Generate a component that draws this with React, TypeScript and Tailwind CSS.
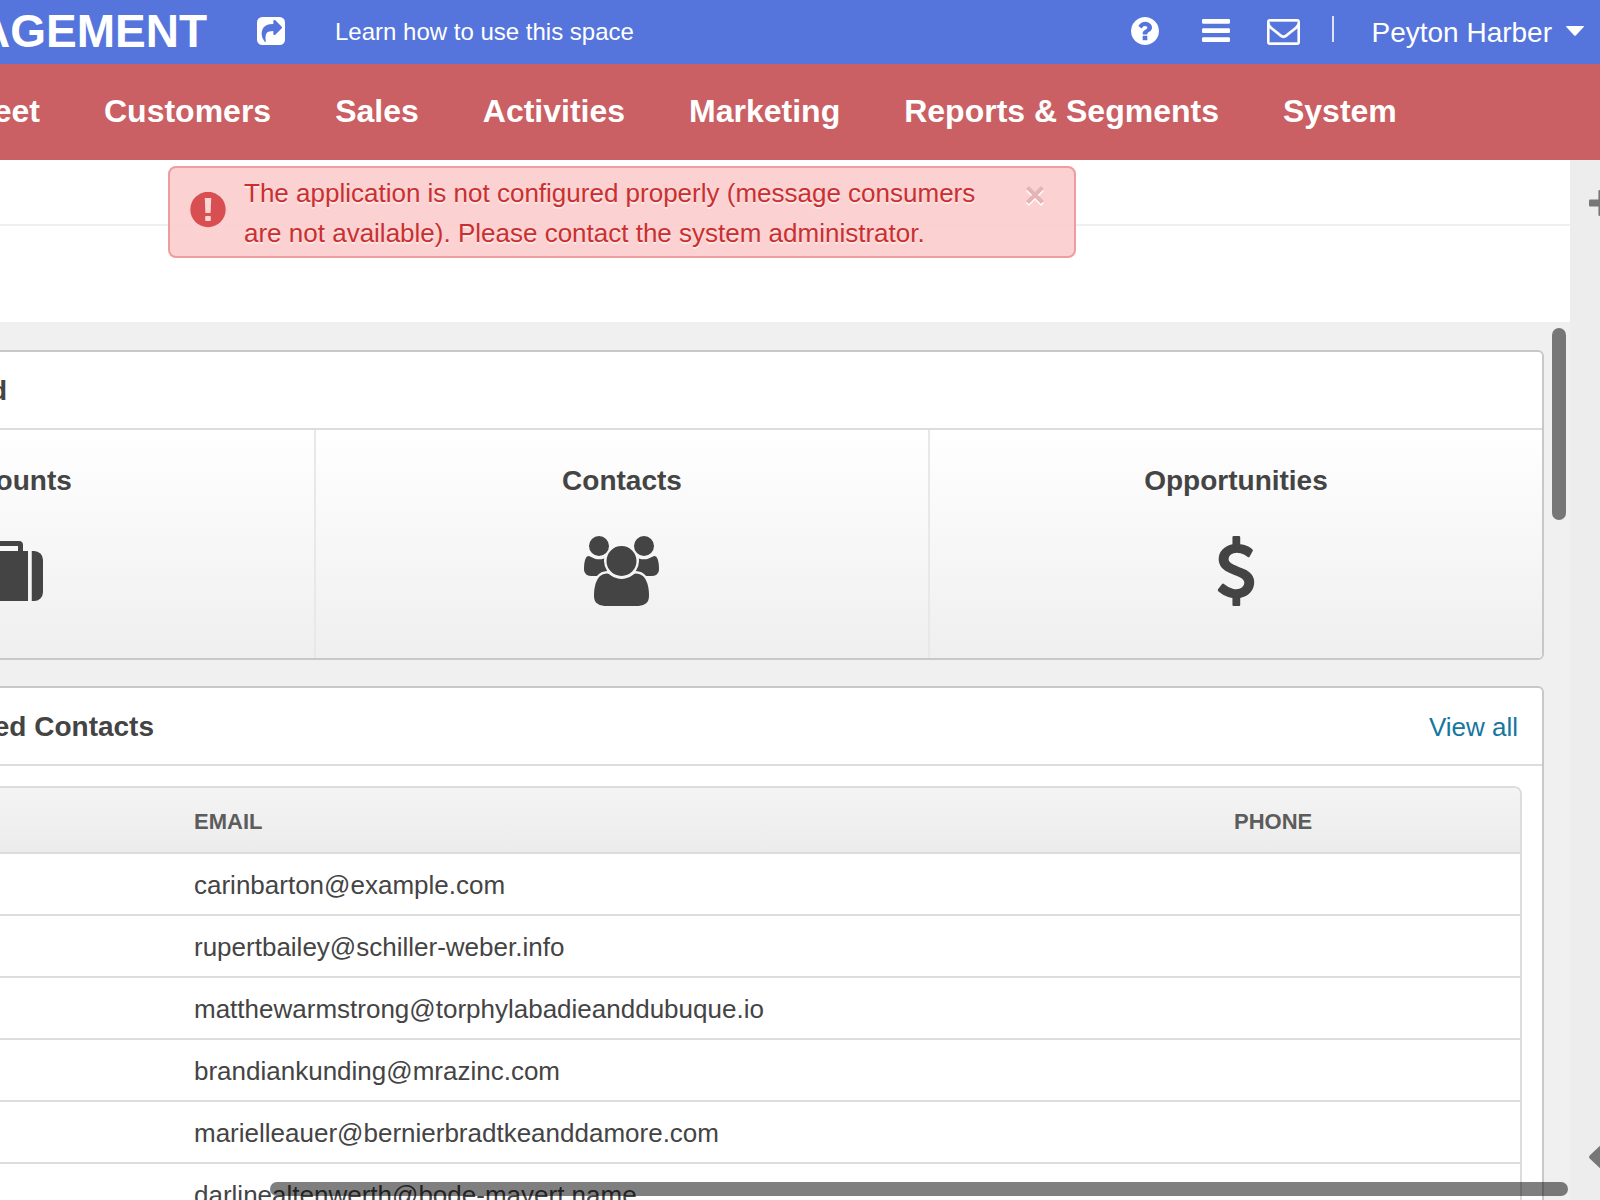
import React from "react";

/* Icon outlines are defined on a y-up grid, so each one is flipped into place. */
function Glyph({ d, box, className }: { d: string; box: string; className: string }) {
  return (
    <svg viewBox={box} className={className} fill="currentColor" preserveAspectRatio="none" aria-hidden="true">
      <path d={d} transform="scale(1,-1)" />
    </svg>
  );
}

const SHARE =
  "M1005 435l352 352q19 19 19 45t-19 45l-352 352q-30 31 -69 14q-40 -17 -40 -59v-160q-119 0 -216 -19.5t-162.5 -51t-114 -79t-76.5 -95.5t-44.5 -109t-21.5 -111.5t-5 -110.5q0 -181 167 -404q11 -12 25 -12q7 0 13 3q22 9 19 33q-44 354 62 473q46 52 130 75.5t224 23.5v-160q0 -42 40 -59q12 -5 24 -5q26 0 45 19zM1536 1120v-960q0 -119 -84.5 -203.5t-203.5 -84.5h-960q-119 0 -203.5 84.5t-84.5 203.5v960q0 119 84.5 203.5t203.5 84.5h960q119 0 203.5 -84.5t84.5 -203.5z";

const USERS =
  "M593 640q-162 -5 -265 -128h-134q-82 0 -138 40.5t-56 118.5q0 353 124 353q6 0 43.5 -21t97.5 -42.5t119 -21.5q67 0 133 23q-5 -37 -5 -66q0 -139 81 -256zM1664 3q0 -120 -73 -189.5t-194 -69.5h-874q-121 0 -194 69.5t-73 189.5q0 53 3.5 103.5t14 109t26.5 108.5t43 97.5t62 81t85.5 53.5t111.5 20q10 0 43 -21.5t73 -48t107 -48t135 -21.5t135 21.5t107 48t73 48t43 21.5q61 0 111.5 -20t85.5 -53.5t62 -81t43 -97.5t26.5 -108.5t14 -109t3.5 -103.5zM640 1280q0 -106 -75 -181t-181 -75t-181 75t-75 181t75 181t181 75t181 -75t75 -181zM1344 896q0 -159 -112.5 -271.5t-271.5 -112.5t-271.5 112.5t-112.5 271.5t112.5 271.5t271.5 112.5t271.5 -112.5t112.5 -271.5zM1920 671q0 -78 -56 -118.5t-138 -40.5h-134q-103 123 -265 128q81 117 81 256q0 29 -5 66q66 -23 133 -23q59 0 119 21.5t97.5 42.5t43.5 21q124 0 124 -353zM1792 1280q0 -106 -75 -181t-181 -75t-181 75t-75 181t75 181t181 75t181 -75t75 -181z";

const DOLLAR =
  "M978 351q0 -153 -99.5 -263.5t-258.5 -136.5v-175q0 -14 -9 -23t-23 -9h-135q-13 0 -22.5 9.5t-9.5 22.5v175q-66 9 -127.5 31t-101.5 44.5t-74 48t-46.5 37.5t-17.5 18q-17 21 -2 41l103 135q7 10 23 12q15 2 24 -9l2 -2q113 -99 243 -125q37 -8 74 -8q81 0 142.5 43t61.5 122q0 28 -15 53t-33.5 42t-58.5 37.5t-66 32t-80 32.5q-39 16 -61.5 25t-61.5 26.5t-62.5 31t-56.5 35.5t-53.5 42.5t-43.5 49t-35.5 58t-21 66.5t-8.5 78q0 138 98 242t255 134v180q0 13 9.5 22.5t22.5 9.5h135q14 0 23 -9t9 -23v-176q57 -6 110.5 -23t87 -33.5t63.5 -37.5t39 -29t15 -14q17 -18 5 -38l-81 -146q-8 -15 -23 -16q-14 -3 -27 7q-3 3 -14.5 12t-39 26.5t-58.5 32t-74.5 26t-85.5 11.5q-95 0 -155 -43t-60 -111q0 -26 8.5 -48t29.5 -41.5t39.5 -33t56 -31t60.5 -27t70 -27.5q53 -20 81 -31.5t76 -35t75.5 -42.5t62 -50t53 -63.5t31.5 -76.5t13 -94z";

const SUITCASE =
  "M640 1280h512v128h-512zM288 1280v-1280h-64q-92 0 -158 66t-66 158v832q0 92 66 158t158 66zM1408 1280v-1280h-1024v1280h128v160q0 40 28 68t68 28h576q40 0 68 -28t28 -68v-160zM1792 1056v-832q0 -92 -66 -158t-158 -66h-64v1280h64q92 0 158 -66t66 -158z";

function HelpIcon() {
  return (
    <svg viewBox="128 128 1536 1536" className="h-7 w-7" fill="currentColor" aria-hidden="true">
      <path d="M1024 1376v-192q0-14-9-23t-23-9h-192q-14 0-23 9t-9 23v192q0 14 9 23t23 9h192q14 0 23-9t9-23zm256-672q0-88-55.5-163t-138.5-116-170-41q-243 0-371 213-15 24 8 42l132 100q7 6 19 6 16 0 25-12 53-68 86-92 34-24 86-24 48 0 85.5 26t37.5 59q0 38-20 61t-68 45q-63 28-115.5 86.5t-52.5 125.5v36q0 14 9 23t23 9h192q14 0 23-9t9-23q0-19 21.5-49.5t54.5-49.5q32-18 49-28.5t46-35 44.5-48 28-60.5 12.5-81zm384 192q0 209-103 385.5t-279.5 279.5-385.5 103-385.5-103-279.5-279.5-103-385.5 103-385.5 279.5-279.5 385.5-103 385.5 103 279.5 279.5 103 385.5z" />
    </svg>
  );
}

function MenuIcon() {
  return (
    <svg viewBox="0 0 28 23" className="mb-px h-[23px] w-7" fill="currentColor" aria-hidden="true">
      <rect x="0" y="0" width="28" height="4.7" rx="1.2" />
      <rect x="0" y="9.2" width="28" height="4.7" rx="1.2" />
      <rect x="0" y="18.3" width="28" height="4.7" rx="1.2" />
    </svg>
  );
}

function MailIcon() {
  return (
    <svg viewBox="0 256 1792 1408" className="mt-0.5 h-[26px] w-[33px]" fill="currentColor" stroke="currentColor" strokeWidth="24" aria-hidden="true">
      <path d="M1664 1504v-768q-32 36-69 66-268 206-426 338-51 43-83 67t-86.5 48.5-102.5 24.5h-2q-48 0-102.5-24.5t-86.5-48.5-83-67q-158-132-426-338-37-30-69-66v768q0 13 9.5 22.5t22.5 9.5h1472q13 0 22.5-9.5t9.5-22.5zm0-1051v-24.5l-.5-13-3-12.5-5.5-9-9-7.5-14-2.5h-1472q-13 0-22.5 9.5t-9.5 22.5q0 168 147 284 193 152 401 317 6 5 35 29.5t46 37.5 44.5 31.5 50.5 27.5 43 9h2q20 0 43-9t50.5-27.5 44.5-31.5 46-37.5 35-29.5q208-165 401-317 54-43 100.5-115.5t46.5-131.5zm128-37v1088q0 66-47 113t-113 47h-1472q-66 0-113-47t-47-113v-1088q0-66 47-113t113-47h1472q66 0 113 47t47 113z" />
    </svg>
  );
}

function TopBar() {
  return (
    <header className="flex h-16 items-center bg-[#5575dc] text-white">
      <div className="flex w-[207px] shrink-0 justify-end pb-px text-[46px] leading-[63px] font-bold">MANAGEMENT</div>
      <Glyph d={SHARE} box="0 -1408 1536 1536" className="-mt-0.5 ml-[50px] h-7 w-7" />
      <span className="ml-[50px] text-2xl leading-[64px] whitespace-nowrap">Learn how to use this space</span>
      <div className="ml-auto flex h-16 items-center pr-4">
        <div className="-mt-0.5 flex items-center">
          <HelpIcon />
          <div className="ml-[43px]"><MenuIcon /></div>
          <div className="ml-[37px]"><MailIcon /></div>
        </div>
        <div className="mb-[6px] ml-[32px] h-[26px] w-0.5 bg-[#dde3f8]" />
        <span className="ml-[37px] pt-0.5 text-[28px] leading-[62px] whitespace-nowrap">Peyton Harber</span>
        <svg viewBox="0 0 18 10" className="mb-0.5 ml-[14px] h-[10px] w-[18px]" fill="currentColor" aria-hidden="true">
          <path d="M.6 0h16.8q.9.2.3 1L10 9.300q-1 1-2 0L.3 1Q-.3.2.6 0z" />
        </svg>
      </div>
    </header>
  );
}

const NAV = ["Customers", "Sales", "Activities", "Marketing", "Reports & Segments", "System"];

function Nav() {
  return (
    <nav className="flex h-24 items-center gap-16 bg-[#ca6064] pb-0.5 text-[32px] leading-[94px] font-bold whitespace-nowrap text-white">
      <div className="flex w-10 shrink-0 justify-end">Sheet</div>
      {NAV.map((n) => (
        <div key={n}>{n}</div>
      ))}
    </nav>
  );
}

function Alert() {
  return (
    <div className="absolute top-[166px] left-[168px] flex h-[92px] w-[908px] rounded-lg border-2 border-[#ee9c9e] bg-[#fbcccd]/90">
      <svg viewBox="0 0 36 36" className="mt-6 ml-5 h-9 w-9 shrink-0" aria-hidden="true">
        <circle cx="18" cy="17.500" r="17.700" fill="#d84f52" />
        <path d="M14.800 6h6.400l-.6 15h-5.200z" fill="#fbd5d5" />
        <rect x="15.200" y="24" width="5.600" height="5" rx="1" fill="#fbd5d5" />
      </svg>
      <p className="mt-[5px] ml-[18px] w-[750px] text-[26px] leading-[40px] text-[#c9302f] [text-shadow:0_2px_0_rgba(255,255,255,0.5)]">
        The application is not configured properly (message consumers are not available). Please contact the system administrator.
      </p>
      <svg viewBox="0 0 18 20" className="mt-[18px] ml-8 h-5 w-[18px]" aria-hidden="true">
        <path d="M1.500 3.500l15 15M16.500 3.500l-15 15" stroke="#fff" strokeWidth="4" />
        <path d="M1.500 1.500l15 15M16.500 1.500l-15 15" stroke="#e6b4b7" strokeWidth="4" />
      </svg>
    </div>
  );
}

function Launchpad() {
  const cell = "flex flex-col items-center pt-[33px] border-r-2 border-[#e8e8e8] last:border-r-0";
  return (
    <section className="-ml-[300px] w-[1844px] overflow-hidden rounded-md border-2 border-[#c8c8c8] bg-white">
      <div className="flex h-[78px] items-center border-b-2 border-[#dcdcdc] pt-0.5">
        <h2 className="flex w-[305px] justify-end text-[28px] font-bold">Quick Launchpad</h2>
      </div>
      <div className="grid h-[228px] grid-cols-[614px_614px_612px] bg-linear-to-b from-white to-[#efefef] text-[28px] leading-[36px] font-bold">
        <div className={cell}>
          <span>Accounts</span>
          <Glyph d={SUITCASE} box="0 -1536 1792 1536" className="mt-[42px] h-[60px] w-[70px]" />
        </div>
        <div className={cell}>
          <span>Contacts</span>
          <Glyph d={USERS} box="0 -1536 1920 1792" className="mt-[37px] mr-px h-[70px] w-[75px]" />
        </div>
        <div className={cell}>
          <span>Opportunities</span>
          <Glyph d={DOLLAR} box="0 -1536 1024 1792" className="mt-[37px] h-[70px] w-10" />
        </div>
      </div>
    </section>
  );
}

const EMAILS = [
  "carinbarton@example.com",
  "rupertbailey@schiller-weber.info",
  "matthewarmstrong@torphylabadieanddubuque.io",
  "brandiankunding@mrazinc.com",
  "marielleauer@bernierbradtkeanddamore.com",
  "darlinealtenwerth@bode-mayert.name",
];

function Contacts() {
  return (
    <section className="mt-[26px] -ml-[300px] w-[1844px] overflow-hidden rounded-t-md border-2 border-[#c8c8c8] bg-white">
      <div className="flex h-[78px] items-center border-b-2 border-[#dcdcdc] pt-0.5">
        <h2 className="flex w-[452px] justify-end text-[28px] font-bold whitespace-nowrap">Recently Accessed Contacts</h2>
        <span className="mr-[24px] ml-auto text-[26px] text-[#16769f]">View all</span>
      </div>
      <div className="mx-5 mt-5 overflow-hidden rounded-t-lg border-2 border-[#dcdcdc]">
        <div className="grid h-[66px] grid-cols-[1040px_1fr] items-center border-b-2 border-[#dcdcdc] bg-linear-to-b from-[#f4f4f4] to-[#ececec] pt-[3px] pl-[470px] text-[22px] font-bold text-[#5c5c5c]">
          <span>EMAIL</span>
          <span>PHONE</span>
        </div>
        {EMAILS.map((e) => (
          <div key={e} className="flex h-[62px] items-center border-b-2 border-[#dcdcdc] pt-[3px] pl-[470px] text-[26px]">
            {e}
          </div>
        ))}
      </div>
    </section>
  );
}

export default function App() {
  return (
    <div className="relative flex h-[1200px] w-[1600px] flex-col overflow-hidden bg-white font-['Liberation_Sans',Arial,sans-serif] text-[#444444]">
      <TopBar />
      <Nav />
      <div className="flex min-h-0 flex-1">
        <main className="flex w-[1570px] shrink-0 flex-col overflow-hidden">
          <div className="h-[66px] shrink-0 border-b-2 border-[#f0f0f0]" />
          <div className="h-24 shrink-0" />
          <div className="min-h-0 flex-1 overflow-hidden bg-[#f0f0f0] pt-7">
            <Launchpad />
            <Contacts />
          </div>
        </main>
        <aside className="flex w-[30px] flex-col justify-between overflow-hidden bg-[#ededed] pt-[30px] pb-[25px] pl-[19px] text-[#777777]">
          <svg viewBox="0 0 26 26" className="h-[26px] w-[26px] shrink-0" fill="currentColor" aria-hidden="true">
            <rect x="0" y="9.400" width="26" height="7.200" rx="1.300" />
            <rect x="9.400" y="0" width="7.200" height="26" rx="1.300" />
          </svg>
          <svg viewBox="0 0 18 36" className="h-9 w-[18px] shrink-0" fill="currentColor" aria-hidden="true">
            <path d="M18 0v36L.7 19.500q-1.200-1.500 0-3z" />
          </svg>
        </aside>
      </div>
      <Alert />
      <div className="absolute top-[328px] left-[1552px] h-[192px] w-[14px] rounded-full bg-[#777777]" />
      <div className="absolute top-[1182px] left-[270px] h-[14px] w-[1298px] rounded-full bg-black/50" />
    </div>
  );
}
